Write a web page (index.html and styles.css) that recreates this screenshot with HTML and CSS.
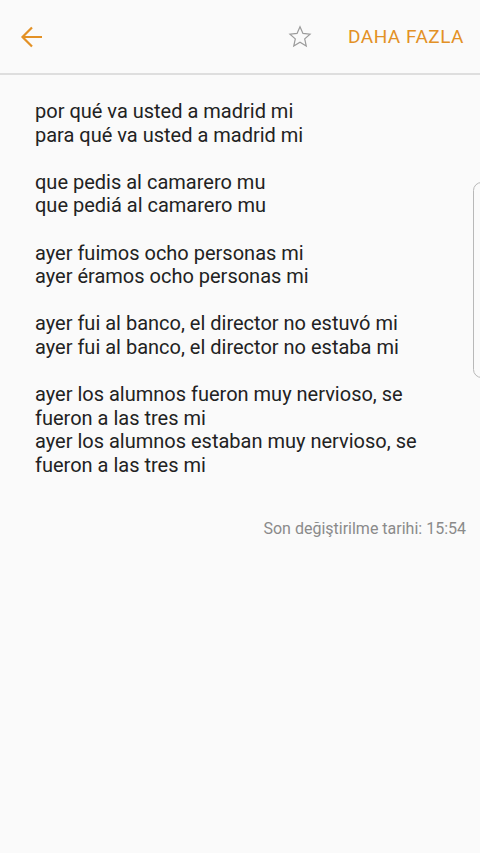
FILE: index.html
```html
<!DOCTYPE html>
<html>
<head>
    <title>Not</title>
    <link rel="stylesheet" href="styles.css">
</head>
<body>
    <div class="toolbar">
        <svg class="back" width="24" height="24" viewBox="0 0 24 24">
            <path d="M22 12H3M12 2.5L2.5 12L12 21.5" fill="none" stroke="#e39125" stroke-width="2.2"/>
        </svg>
        <div class="spacer"></div>
        <svg class="star" width="24" height="24" viewBox="0 0 24 24">
            <path d="M12 1.8l2.95 6.6 7.1.7-5.35 4.8 1.55 7.05L12 17.3l-6.25 3.65 1.55-7.05L1.95 9.1l7.1-.7z" fill="none" stroke="#9b9b9b" stroke-width="1.2" stroke-linejoin="miter"/>
        </svg>
        <div class="more">DAHA FAZLA</div>
    </div>

    <div class="note">
        <p>por qué va usted a madrid mi<br>para qué va usted a madrid mi</p>
        <p>que pedis al camarero mu<br>que pediá al camarero mu</p>
        <p>ayer fuimos ocho personas mi<br>ayer éramos ocho personas mi</p>
        <p>ayer fui al banco, el director no estuvó mi<br>ayer fui al banco, el director no estaba mi</p>
        <p>ayer los alumnos fueron muy nervioso, se fueron a las tres mi<br>ayer los alumnos estaban muy nervioso, se fueron a las tres mi</p>
    </div>

    <div class="modified">Son değiştirilme tarihi: 15:54</div>

    <div class="handle"></div>
</body>
</html>
```

FILE: styles.css
```css
html, body {
    margin: 0;
    padding: 0;
    background: #fafafa;
    font-family: Roboto, "Noto Sans", sans-serif;
}
.toolbar {
    display: flex;
    align-items: center;
    height: 73px;
    border-bottom: 2px solid #dedede;
    padding: 0 16px 0 20px;
}
.back {
    display: block;
}
.spacer {
    flex: 1;
}
.star {
    display: block;
    margin-right: 36px;
    margin-top: 1px;
}
.more {
    color: #e39125;
    font-size: 19px;
    letter-spacing: 0.5px;
}
.note {
    padding: 25px 50px 0 35px;
    color: #222;
    font-size: 20px;
    line-height: 23.6px;
}
.note p {
    margin: 0 0 23.6px 0;
}
.modified {
    text-align: right;
    color: #8a8a8a;
    font-size: 16px;
    padding: 18px 14px 0 0;
}
.handle {
    position: absolute;
    right: -10px;
    top: 182px;
    width: 15px;
    height: 194px;
    border: 1.5px solid #b8b8b8;
    border-radius: 12px;
}
```
